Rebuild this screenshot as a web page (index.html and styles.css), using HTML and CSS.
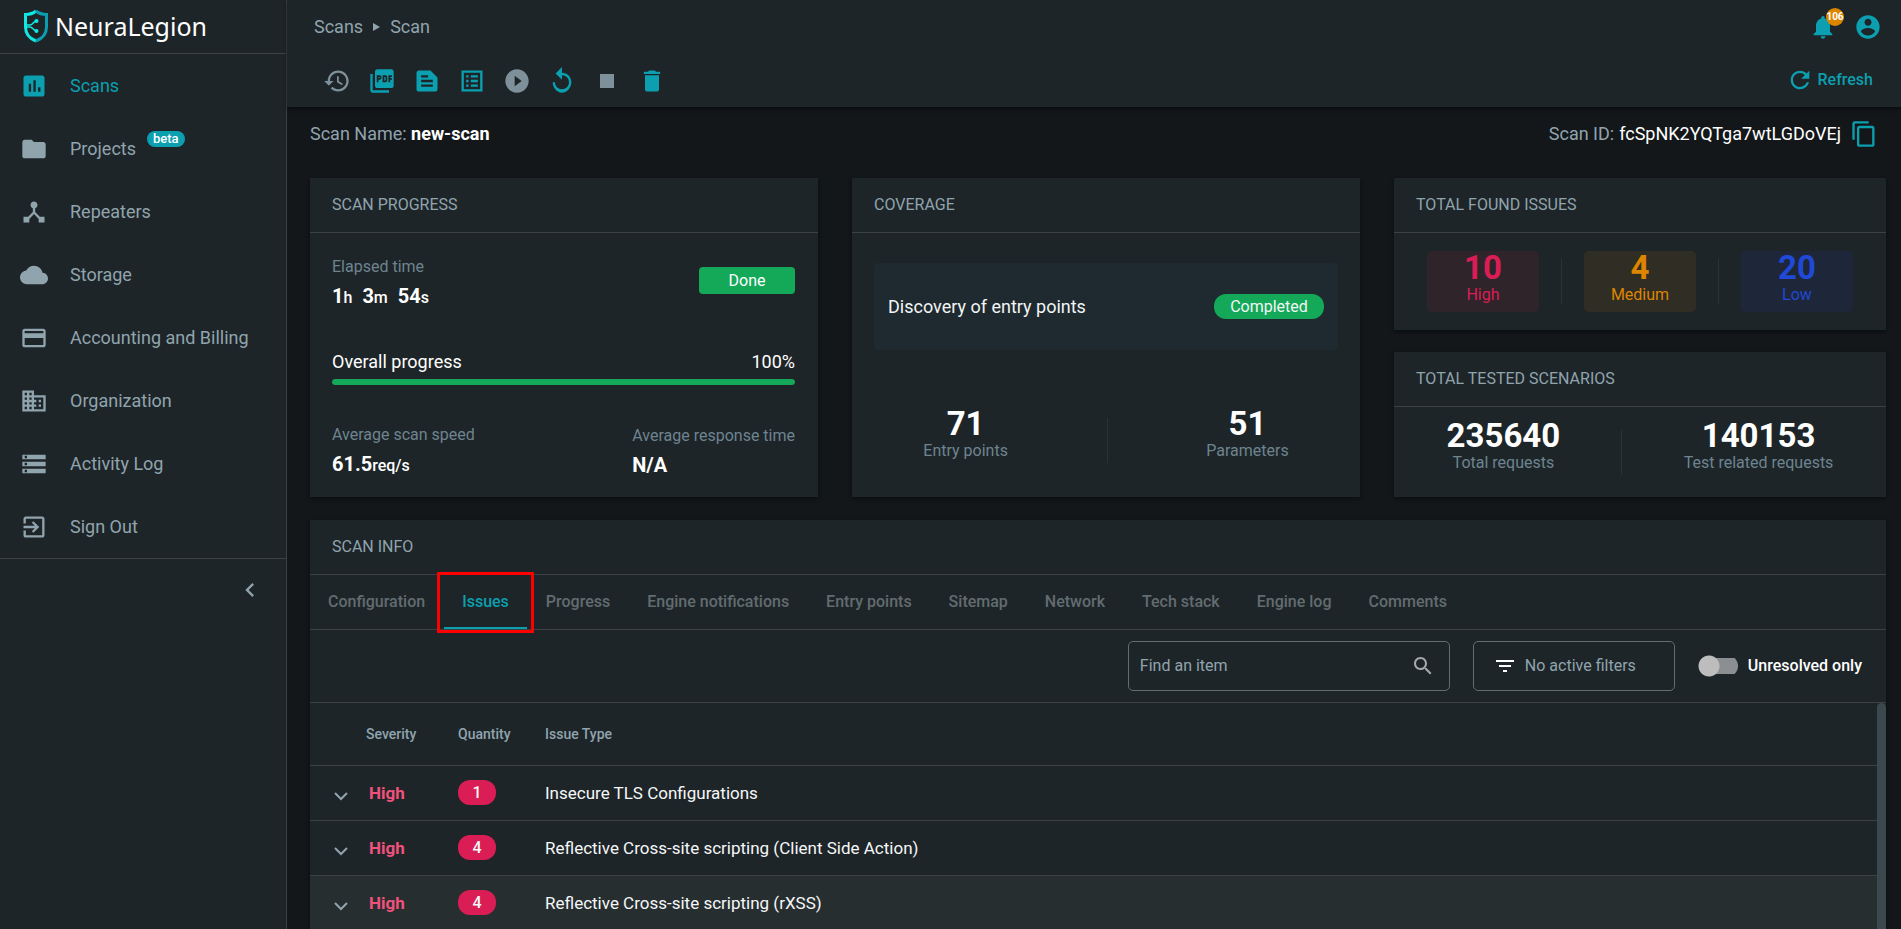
FILE: index.html
```html
<!DOCTYPE html>
<html lang="en">
<head>
<meta charset="utf-8">
<title>NeuraLegion - Scan</title>
<link rel="stylesheet" href="styles.css">
</head>
<body>
<div class="app">
  <aside class="sidebar">
    <a class="brand" href="#">
      <svg class="brand-mark" viewBox="0 0 24 34" aria-hidden="true">
        <path fill="none" stroke="#0fe9e2" stroke-width="3" d="M12 2C9 4.500 5 5.500 1.500 5.500V18c0 7 4 11.500 10.500 14"/>
        <path fill="none" stroke="#0a9eb0" stroke-width="3" d="M12 2c3 2.500 7 3.500 10.500 3.500V18c0 7-4 11.500-10.500 14"/>
        <path fill="none" stroke="#0fe9e2" stroke-width="1.600" d="M2 16h4c3 0 3-4 7-4M2 18h4c3 0 3 4 7 4"/>
        <circle cx="12.500" cy="12" r="2" fill="#0fe9e2"/><circle cx="12.500" cy="22" r="2" fill="#0fe9e2"/>
      </svg>
      <span class="brand-name">NeuraLegion</span>
    </a>
    <nav class="nav">
      <a class="nav-item active" href="#"><svg class="icon" viewBox="0 0 24 24"><path d="M19 3H5c-1.100 0-2 .9-2 2v14c0 1.100.9 2 2 2h14c1.100 0 2-.9 2-2V5c0-1.100-.9-2-2-2zM9.500 17h-2v-7h2v7zm4 0h-2V7h2v10zm4 0h-2v-4h2v4z"/></svg><span>Scans</span></a>
      <a class="nav-item" href="#"><svg class="icon" viewBox="0 0 24 24"><path d="M10 4H4c-1.100 0-2 .9-2 2v12c0 1.100.9 2 2 2h16c1.100 0 2-.9 2-2V8c0-1.100-.9-2-2-2h-8l-2-2z"/></svg><span>Projects</span><span class="beta">beta</span></a>
      <a class="nav-item" href="#"><svg class="icon" viewBox="0 0 24 24"><path d="M17 16l-4-4V8.820C14.160 8.400 15 7.300 15 6c0-1.660-1.340-3-3-3S9 4.340 9 6c0 1.300.84 2.400 2 2.820V12l-4 4H3v5h5v-3.050l4-4.200 4 4.200V21h5v-5h-4z"/></svg><span>Repeaters</span></a>
      <a class="nav-item" href="#"><svg class="icon" viewBox="0 0 24 24"><path d="M19.350 10.040C18.670 6.590 15.640 4 12 4 9.110 4 6.600 5.640 5.350 8.040 2.340 8.360 0 10.910 0 14c0 3.310 2.690 6 6 6h13c2.760 0 5-2.240 5-5 0-2.640-2.050-4.780-4.650-4.960z"/></svg><span>Storage</span></a>
      <a class="nav-item" href="#"><svg class="icon" viewBox="0 0 24 24"><path d="M20 4H4c-1.110 0-1.990.89-1.990 2L2 18c0 1.110.89 2 2 2h16c1.110 0 2-.89 2-2V6c0-1.110-.89-2-2-2zm0 14H4v-6h16v6zm0-10H4V6h16v2z"/></svg><span>Accounting and Billing</span></a>
      <a class="nav-item" href="#"><svg class="icon" viewBox="0 0 24 24"><path d="M12 7V3H2v18h20V7H12zM6 19H4v-2h2v2zm0-4H4v-2h2v2zm0-4H4V9h2v2zm0-4H4V5h2v2zm4 12H8v-2h2v2zm0-4H8v-2h2v2zm0-4H8V9h2v2zm0-4H8V5h2v2zm10 12h-8v-2h2v-2h-2v-2h2v-2h-2V9h8v10zm-2-8h-2v2h2v-2zm0 4h-2v2h2v-2z"/></svg><span>Organization</span></a>
      <a class="nav-item" href="#"><svg class="icon" viewBox="0 0 24 24"><path d="M2 20h20v-4H2v4zm2-3h2v2H4v-2zM2 4v4h20V4H2zm4 3H4V5h2v2zm-4 7h20v-4H2v4zm2-3h2v2H4v-2z"/></svg><span>Activity Log</span></a>
      <a class="nav-item" href="#"><svg class="icon" viewBox="0 0 24 24"><path d="M10.090 15.590L11.500 17l5-5-5-5-1.410 1.410L12.670 11H3v2h9.670l-2.580 2.590zM19 3H5c-1.110 0-2 .9-2 2v4h2V5h14v14H5v-4H3v4c0 1.100.89 2 2 2h14c1.100 0 2-.9 2-2V5c0-1.100-.9-2-2-2z"/></svg><span>Sign Out</span></a>
    </nav>
    <button class="collapse" type="button" aria-label="Collapse menu"><svg class="icon" viewBox="0 0 24 24"><path d="M15.410 7.410L14 6l-6 6 6 6 1.410-1.410L10.830 12z"/></svg></button>
  </aside>

  <div class="page">
    <header class="topbar">
      <div class="topbar-row">
        <nav class="crumbs" aria-label="Breadcrumb"><a href="#">Scans</a><svg class="crumb-arrow" viewBox="0 0 7 8"><path d="M0 0l7 4-7 4z"/></svg><a href="#">Scan</a></nav>
        <div class="account">
          <button class="icon-btn bell" type="button" aria-label="Notifications"><svg class="icon" viewBox="0 0 24 24"><path d="M12 22c1.100 0 2-.9 2-2h-4c0 1.100.89 2 2 2zm6-6v-5c0-3.070-1.640-5.640-4.500-6.320V4c0-.83-.67-1.500-1.500-1.500s-1.500.67-1.500 1.500v.68C7.630 5.360 6 7.920 6 11v5l-2 2v1h16v-1l-2-2z"/></svg><span class="count">106</span></button>
          <button class="icon-btn" type="button" aria-label="Account"><svg class="icon" viewBox="0 0 24 24"><path d="M12 2C6.480 2 2 6.480 2 12s4.480 10 10 10 10-4.480 10-10S17.520 2 12 2zm0 3c1.660 0 3 1.340 3 3s-1.340 3-3 3-3-1.340-3-3 1.340-3 3-3zm0 14.200c-2.500 0-4.710-1.280-6-3.220.03-1.990 4-3.080 6-3.080 1.990 0 5.970 1.090 6 3.080-1.290 1.940-3.500 3.220-6 3.220z"/></svg></button>
        </div>
      </div>
      <div class="topbar-row">
        <div class="tools">
          <button class="icon-btn muted" type="button" aria-label="History"><svg class="icon" viewBox="0 0 24 24"><path d="M13 3c-4.970 0-9 4.030-9 9H1l3.890 3.890.07.14L9 12H6c0-3.870 3.130-7 7-7s7 3.130 7 7-3.130 7-7 7c-1.930 0-3.680-.79-4.940-2.060l-1.420 1.420C8.270 19.990 10.510 21 13 21c4.970 0 9-4.030 9-9s-4.030-9-9-9zm-1 5v5l4.280 2.540.72-1.210-3.500-2.080V8H12z"/></svg></button>
          <button class="icon-btn" type="button" aria-label="PDF report"><svg class="icon" viewBox="0 0 24 24"><path d="M20 2H8c-1.100 0-2 .9-2 2v12c0 1.100.9 2 2 2h12c1.100 0 2-.9 2-2V4c0-1.100-.9-2-2-2zm-8.500 7.500c0 .83-.67 1.500-1.500 1.500H9v2H7.500V7H10c.83 0 1.500.67 1.500 1.500v1zm5 2c0 .83-.67 1.500-1.500 1.500h-2.500V7H15c.83 0 1.500.67 1.500 1.500v3zm4-3H19v1h1.500V11H19v2h-1.500V7h3v1.500zM9 9.500h1v-1H9v1zM4 6H2v14c0 1.100.9 2 2 2h14v-2H4V6zm10 5.500h1v-3h-1v3z"/></svg></button>
          <button class="icon-btn" type="button" aria-label="Text report"><svg class="icon" viewBox="0 0 24 24"><path d="M15 3H5c-1.100 0-1.990.9-1.990 2L3 19c0 1.100.89 2 1.990 2H19c1.100 0 2-.9 2-2V9l-6-6zM7 7h6v2H7V7zm10 10H7v-2h10v2zm0-4H7v-2h10v2z"/></svg></button>
          <button class="icon-btn" type="button" aria-label="List report"><svg class="icon" viewBox="0 0 24 24"><path d="M19 5v14H5V5h14m2-2H3v18h18V3zM11 7h6v2h-6V7zm0 4h6v2h-6v-2zm0 4h6v2h-6v-2zM7 7h2v2H7V7zm0 4h2v2H7v-2zm0 4h2v2H7v-2z"/></svg></button>
          <button class="icon-btn muted" type="button" aria-label="Resume"><svg class="icon" viewBox="0 0 24 24"><path d="M12 2C6.480 2 2 6.480 2 12s4.480 10 10 10 10-4.480 10-10S17.520 2 12 2zm-2 14.500v-9l6 4.500-6 4.500z"/></svg></button>
          <button class="icon-btn" type="button" aria-label="Restart"><svg class="icon" viewBox="0 0 24 24"><path d="M12 5V0L6.500 5.500 12 11V7c3.310 0 6 2.690 6 6s-2.690 6-6 6-6-2.690-6-6H4c0 4.420 3.580 9 8 9s8-4.580 8-9-3.580-8-8-8z"/></svg></button>
          <button class="icon-btn muted" type="button" aria-label="Stop"><svg class="icon" viewBox="0 0 24 24"><path d="M6 6h12v12H6z"/></svg></button>
          <button class="icon-btn" type="button" aria-label="Delete"><svg class="icon" viewBox="0 0 24 24"><path d="M6 19c0 1.100.9 2 2 2h8c1.100 0 2-.9 2-2V7H6v12zM19 4h-3.500l-1-1h-5l-1 1H5v2h14V4z"/></svg></button>
        </div>
        <button class="refresh" type="button"><svg class="icon" viewBox="0 0 24 24"><path d="M17.650 6.350C16.200 4.900 14.210 4 12 4c-4.420 0-7.990 3.580-7.990 8s3.570 8 7.990 8c3.730 0 6.840-2.550 7.730-6h-2.080c-.82 2.330-3.040 4-5.650 4-3.310 0-6-2.690-6-6s2.690-6 6-6c1.660 0 3.140.69 4.220 1.780L13 11h7V4l-2.350 2.350z"/></svg>Refresh</button>
      </div>
    </header>

    <main class="content">
      <div class="scan-head">
        <p class="scan-label">Scan Name: <strong>new-scan</strong></p>
        <p class="scan-label scan-id">Scan ID: <span class="id-value">fcSpNK2YQTga7wtLGDoVEj</span>
          <button class="icon-btn" type="button" aria-label="Copy scan ID"><svg class="icon" viewBox="0 0 24 24"><path d="M16 1H4c-1.100 0-2 .9-2 2v14h2V3h12V1zm3 4H8c-1.100 0-2 .9-2 2v14c0 1.100.9 2 2 2h11c1.100 0 2-.9 2-2V7c0-1.100-.9-2-2-2zm0 16H8V7h11v14z"/></svg></button></p>
      </div>

      <div class="cards">
        <section class="card">
          <h2 class="card-title">SCAN PROGRESS</h2>
          <div class="card-body progress-body">
            <div class="row">
              <div><div class="label">Elapsed time</div><div class="value elapsed"><span>1<small>h</small></span><span>3<small>m</small></span><span>54<small>s</small></span></div></div>
              <span class="status">Done</span>
            </div>
            <div>
              <div class="row overall"><span>Overall progress</span><span>100%</span></div>
              <div class="bar"><div class="bar-fill" style="width:100%"></div></div>
            </div>
            <div class="row">
              <div><div class="label">Average scan speed</div><div class="value">61.5<small>req/s</small></div></div>
              <div><div class="label">Average response time</div><div class="value">N/A</div></div>
            </div>
          </div>
        </section>

        <section class="card">
          <h2 class="card-title">COVERAGE</h2>
          <div class="card-body coverage-body">
            <div class="discovery"><span>Discovery of entry points</span><span class="completed">Completed</span></div>
            <div class="stats">
              <div class="stat"><b>71</b><span>Entry points</span></div>
              <div class="divider"></div>
              <div class="stat"><b>51</b><span>Parameters</span></div>
            </div>
          </div>
        </section>

        <div class="card-stack">
          <section class="card">
            <h2 class="card-title">TOTAL FOUND ISSUES</h2>
            <div class="card-body issues-body">
              <div class="stats">
                <div class="stat sev high"><b>10</b><span>High</span></div>
                <div class="divider"></div>
                <div class="stat sev medium"><b>4</b><span>Medium</span></div>
                <div class="divider"></div>
                <div class="stat sev low"><b>20</b><span>Low</span></div>
              </div>
            </div>
          </section>
          <section class="card">
            <h2 class="card-title">TOTAL TESTED SCENARIOS</h2>
            <div class="card-body tested-body">
              <div class="stats">
                <div class="stat"><b>235640</b><span>Total requests</span></div>
                <div class="divider"></div>
                <div class="stat"><b>140153</b><span>Test related requests</span></div>
              </div>
            </div>
          </section>
        </div>
      </div>

      <section class="card info">
        <h2 class="card-title">SCAN INFO</h2>
        <div class="tabs" role="tablist">
          <button class="tab" role="tab" type="button">Configuration</button>
          <button class="tab selected" role="tab" type="button" aria-selected="true">Issues</button>
          <button class="tab" role="tab" type="button">Progress</button>
          <button class="tab" role="tab" type="button">Engine notifications</button>
          <button class="tab" role="tab" type="button">Entry points</button>
          <button class="tab" role="tab" type="button">Sitemap</button>
          <button class="tab" role="tab" type="button">Network</button>
          <button class="tab" role="tab" type="button">Tech stack</button>
          <button class="tab" role="tab" type="button">Engine log</button>
          <button class="tab" role="tab" type="button">Comments</button>
        </div>
        <div class="filters">
          <label class="search"><input type="text" placeholder="Find an item" aria-label="Find an item"><svg class="icon" viewBox="0 0 24 24"><path d="M15.500 14h-.79l-.28-.27C15.410 12.590 16 11.110 16 9.500 16 5.910 13.090 3 9.500 3S3 5.910 3 9.500 5.910 16 9.500 16c1.610 0 3.090-.59 4.230-1.570l.27.28v.79l5 4.990L20.490 19l-4.990-5zm-6 0C7.010 14 5 11.990 5 9.500S7.010 5 9.500 5 14 7.010 14 9.500 11.990 14 9.500 14z"/></svg></label>
          <button class="filter-btn" type="button"><svg class="icon" viewBox="0 0 24 24"><path d="M10 18h4v-2h-4v2zM3 6v2h18V6H3zm3 7h12v-2H6v2z"/></svg>No active filters</button>
          <label class="toggle"><input type="checkbox" role="switch">Unresolved only</label>
        </div>
        <div class="table-area">
          <table class="issues">
            <colgroup><col class="col-open"><col class="col-sev"><col class="col-qty"><col></colgroup>
            <thead><tr><th></th><th>Severity</th><th>Quantity</th><th>Issue Type</th></tr></thead>
            <tbody>
              <tr><td><button class="expand" type="button" aria-label="Expand"><svg viewBox="0 0 14 10"><path d="M1 1l6 6 6-6"/></svg></button></td><td class="sev-text">High</td><td><span class="qty">1</span></td><td>Insecure TLS Configurations</td></tr>
              <tr><td><button class="expand" type="button" aria-label="Expand"><svg viewBox="0 0 14 10"><path d="M1 1l6 6 6-6"/></svg></button></td><td class="sev-text">High</td><td><span class="qty">4</span></td><td>Reflective Cross-site scripting (Client Side Action)</td></tr>
              <tr class="hovered"><td><button class="expand" type="button" aria-label="Expand"><svg viewBox="0 0 14 10"><path d="M1 1l6 6 6-6"/></svg></button></td><td class="sev-text">High</td><td><span class="qty">4</span></td><td>Reflective Cross-site scripting (rXSS)</td></tr>
            </tbody>
          </table>
          <div class="scroll-thumb"></div>
        </div>
      </section>
    </main>
  </div>
</div>
</body>
</html>
```
FILE: styles.css
```css
:root {
  --bg: #13171a;
  --panel: #1e2528;
  --line: #3b4144;
  --text: #90a4ae;
  --label: #6d8490;
  --teal: #0b9fb0;
  --green: #13a958;
  --red: #db1d55;
}
* { box-sizing: border-box; }
body {
  margin: 0;
  background: var(--bg);
  color: var(--text);
  font-family: Roboto, "Noto Sans", sans-serif;
  font-size: 16px;
  line-height: 24px;
}
button, input { font: inherit; color: inherit; }
button { background: none; border: 0; padding: 0; cursor: pointer; }
a { color: inherit; text-decoration: none; }
h2, p { margin: 0; font-weight: 400; }
.icon { width: 28px; height: 28px; fill: currentColor; flex: none; display: block; }

.app { display: flex; height: 100vh; overflow: hidden; }

/* Sidebar */
.sidebar { width: 287px; flex: none; background: var(--panel); border-right: 1px solid var(--line); }
.brand { display: flex; align-items: center; gap: 7px; height: 54px; padding: 0 24px 2px; border-bottom: 1px solid var(--line); }
.brand-mark { width: 24px; height: 34px; }
.brand-name { font-family: "Noto Sans", sans-serif; font-size: 25px; line-height: 34px; color: #fff; }
.nav { border-bottom: 1px solid var(--line); }
.nav-item { display: flex; align-items: center; height: 63px; padding-left: 20px; font-size: 18px; }
.nav-item .icon { margin-right: 22px; }
.nav-item.active { color: var(--teal); }
.beta { align-self: flex-start; margin: 14px 0 0 11px; padding: 0 6px; border-radius: 8px; background: var(--teal); color: #fff; font-size: 13px; font-weight: 500; line-height: 16px; }
.collapse { display: block; margin: 17px 22px 0 auto; }

/* Header */
.page { flex: 1; min-width: 0; display: flex; flex-direction: column; }
.topbar { background: var(--panel); height: 107px; padding: 0 19px 0 27px; box-shadow: 0 2px 4px rgba(0, 0, 0, .5); position: relative; }
.topbar-row { display: flex; justify-content: space-between; align-items: center; height: 54px; }
.crumbs { display: flex; align-items: center; gap: 10px; font-size: 18px; }
.crumb-arrow { width: 7px; height: 8px; fill: currentColor; }
.icon-btn { color: var(--teal); }
.icon-btn.muted { color: #7e909a; }
.account { display: flex; gap: 17px; }
.bell { position: relative; }
.count { position: absolute; top: -5px; right: -7px; width: 18px; height: 18px; border-radius: 50%; background: #de8500; color: #fff; font-size: 10px; font-weight: 700; line-height: 18px; text-align: center; }
.tools { display: flex; gap: 17px; padding-left: 9px; }
.refresh { display: flex; align-items: center; gap: 4px; padding: 0 9px 2px 0; color: var(--teal); font-weight: 500; }

/* Scan header */
.content { flex: 1; min-height: 0; display: flex; flex-direction: column; padding: 0 15px 0 23px; }
.scan-head { display: flex; justify-content: space-between; align-items: center; height: 71px; padding-bottom: 18px; flex: none; }
.scan-label { font-size: 18px; }
.scan-label strong, .id-value { color: #fff; }
.scan-id { display: flex; align-items: center; gap: 5px; padding-right: 8px; }
.scan-id .icon-btn { margin-left: 4px; }

/* Cards */
.cards { display: grid; grid-template-columns: 508fr 508fr 492fr; gap: 34px; flex: none; }
.card { background: var(--panel); box-shadow: 0 2px 4px rgba(0, 0, 0, .4); display: flex; flex-direction: column; }
.card-title { height: 55px; padding: 0 22px; border-bottom: 1px solid var(--line); font-size: 16px; line-height: 54px; flex: none; }
.card-body { flex: 1; padding: 22px; }
.card-stack { display: grid; grid-template-rows: 152px 145px; gap: 22px; }
.row { display: flex; justify-content: space-between; align-items: center; }
.progress-body { display: flex; flex-direction: column; justify-content: space-between; padding: 22px 23px 17px 22px; }
.label { color: var(--label); }
.value { color: #fff; font-size: 20px; font-weight: 700; line-height: 28px; margin-top: 3px; }
.value small { font-size: 16px; font-weight: 500; }
.elapsed { display: flex; gap: 10px; }
.status { width: 96px; margin-bottom: 6px; border-radius: 4px; background: var(--green); color: #fff; line-height: 27px; text-align: center; }
.overall { color: #fff; font-size: 18px; }
.bar { height: 6px; margin-top: 5px; border-radius: 3px; background: #33413a; overflow: hidden; }
.bar-fill { height: 100%; background: var(--green); border-radius: 3px; }

.coverage-body { display: flex; flex-direction: column; gap: 55px; padding-top: 30px; }
.discovery { display: flex; align-items: center; justify-content: space-between; height: 87px; padding: 0 14px; border-radius: 4px; background: #1e2a2f; color: #f2f5f6; font-size: 18px; }
.completed { width: 110px; border-radius: 12px; background: var(--green); font-size: 16px; line-height: 25px; text-align: center; }
.stats { display: flex; justify-content: space-around; align-items: center; }
.stat { display: flex; flex-direction: column; align-items: center; color: var(--label); line-height: 20px; }
.stat b { color: #fff; font-size: 33px; line-height: 34px; }
.divider { width: 1px; height: 45px; background: #2a3236; }
.coverage-body .divider, .tested-body .divider { margin-top: 13px; }
.card-body.issues-body { padding-top: 18px; padding-bottom: 12px; }
.card-body.tested-body { padding-top: 10px; padding-bottom: 12px; }
.sev { width: 112px; height: 61px; border-radius: 5px; }
.sev span, .sev b { color: inherit; }
.high { background: #30242b; color: var(--red); }
.medium { background: #302d24; color: #de8500; }
.low { background: #1e2739; color: #1f49d6; }

/* Scan info */
.info { flex: 1; min-height: 0; margin-top: 23px; }
.tabs { display: flex; gap: 1px; height: 55px; border-bottom: 1px solid var(--line); flex: none; }
.tab { position: relative; padding: 0 18px; color: #626c70; font-weight: 500; }
.tab.selected { color: var(--teal); box-shadow: inset 0 -2px var(--teal); }
.tab.selected::after { content: ""; position: absolute; inset: -3px -7px -4px -7px; border: 3px solid #f00; }
.filters { display: flex; justify-content: flex-end; align-items: center; gap: 23px; height: 73px; padding-right: 24px; border-bottom: 1px solid var(--line); flex: none; }
.search, .filter-btn { display: flex; align-items: center; height: 50px; border: 1px solid #656c6f; border-radius: 5px; }
.search { width: 322px; padding: 0 14px 0 11px; }
.search input { flex: 1; min-width: 0; border: 0; background: none; outline: 0; padding: 0; }
.search input::placeholder { color: var(--text); opacity: 1; }
.search .icon { width: 24px; height: 24px; color: #a4a9ab; }
.filter-btn { width: 202px; padding-left: 19px; gap: 8px; }
.filter-btn .icon { width: 24px; height: 24px; color: #fff; }
.toggle { display: flex; align-items: center; gap: 10px; color: #fff; font-weight: 500; }
.toggle input { appearance: none; width: 40px; height: 22px; margin: 0; background: radial-gradient(circle at 11px 11px, #bdbdbd 10px, transparent 11px), linear-gradient(#8b8f91, #8b8f91) 4px 3px / 36px 16px no-repeat; border-radius: 11px; }
.table-area { display: flex; flex: 1; min-height: 0; overflow: hidden; }
.issues { flex: 1; table-layout: fixed; border-collapse: collapse; align-self: flex-start; color: #f5f7f8; }
.col-open { width: 56px; }
.col-sev { width: 92px; }
.col-qty { width: 87px; }
.issues th { height: 62px; padding: 0; text-align: left; color: var(--text); font-size: 14px; font-weight: 500; }
.issues td { height: 55px; padding: 0; font-size: 17px; }
.issues tr { border-bottom: 1px solid var(--line); }
.issues .sev-text { padding-left: 3px; color: #f0527d; font-weight: 700; }
.qty { display: block; width: 38px; border-radius: 12px; background: var(--red); font-size: 16px; font-weight: 500; line-height: 25px; text-align: center; }
.expand { display: block; padding: 9px 0 0 24px; }
.expand svg { display: block; width: 14px; height: 10px; fill: none; stroke: var(--text); stroke-width: 2; }
.hovered { background: #262e30; }
.scroll-thumb { width: 9px; border-radius: 5px 5px 0 0; background: #3b484d; }
```
